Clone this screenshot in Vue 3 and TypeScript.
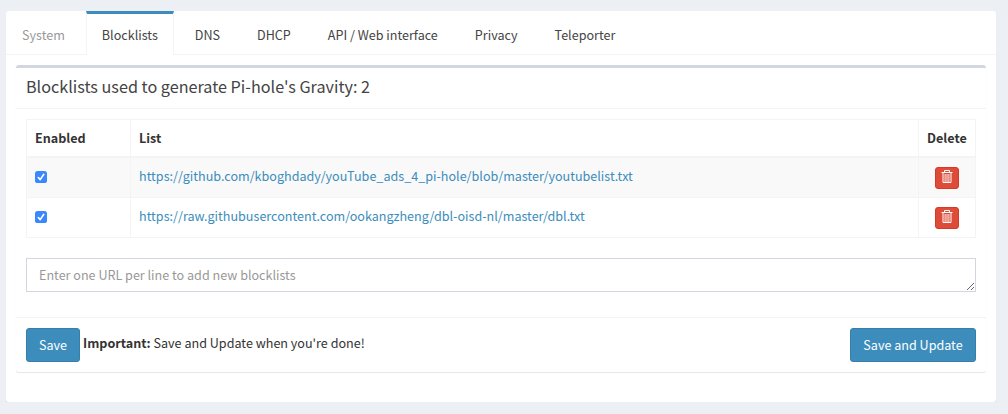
<script setup lang="ts">
import { ref } from 'vue'

interface Blocklist {
  url: string
  enabled: boolean
}

const tabs: string[] = ['System', 'Blocklists', 'DNS', 'DHCP', 'API / Web interface', 'Privacy', 'Teleporter']
const active = ref('Blocklists')
const newLists = ref('')
const lists = ref<Blocklist[]>([
  { url: 'https://github.com/kboghdady/youTube_ads_4_pi-hole/blob/master/youtubelist.txt', enabled: true },
  { url: 'https://raw.githubusercontent.com/ookangzheng/dbl-oisd-nl/master/dbl.txt', enabled: true },
])
</script>

<template>
  <main class="card">
    <nav class="tabs">
      <a
        v-for="tab in tabs"
        :key="tab"
        class="tab"
        :class="{ active: tab === active, muted: tab === 'System' }"
        @click="active = tab"
      >{{ tab }}</a>
    </nav>
    <section class="box">
      <h3 class="box-title">Blocklists used to generate Pi-hole's Gravity: {{ lists.length }}</h3>
      <div class="box-body">
        <div class="table">
          <div class="row head">
            <div class="cell">Enabled</div>
            <div class="cell">List</div>
            <div class="cell">Delete</div>
          </div>
          <div v-for="list in lists" :key="list.url" class="row">
            <div class="cell">
              <label class="check">
                <input v-model="list.enabled" type="checkbox">
                <svg viewBox="0 0 12 12" width="12" height="12">
                  <rect width="12" height="12" rx="2.6" :fill="list.enabled ? '#3b87fd' : '#ccc'" />
                  <path v-if="list.enabled" d="M3.3 6.5 5.2 8.6 8.8 3.3" fill="none" stroke="#fff" stroke-width="1.6" stroke-linecap="round" stroke-linejoin="round" />
                </svg>
              </label>
            </div>
            <div class="cell"><a class="link">{{ list.url }}</a></div>
            <div class="cell center">
              <button class="trash" type="button" aria-label="Delete">
                <svg viewBox="0 0 12 14" width="12" height="14" fill="none" stroke="#fff">
                  <path d="M.5 2.5H11.5M3.5 2.5V.5H8.5V2.5" stroke-width="1" />
                  <path d="M2 3V12.5H10V3" stroke-width="1" />
                  <path d="M4.1 4V12.5M6 4V12.5M7.9 4V12.5" stroke-width=".9" />
                </svg>
              </button>
            </div>
          </div>
        </div>
        <textarea v-model="newLists" class="input" rows="1" placeholder="Enter one URL per line to add new blocklists" />
      </div>
      <footer class="foot">
        <button class="btn" type="button">Save</button>
        <span class="note"><strong>Important:</strong> Save and Update when you're done!</span>
        <button class="btn update" type="button">Save and Update</button>
      </footer>
    </section>
  </main>
</template>

<style>
body {
  background: #ecf0f5;
}
</style>

<style scoped>
* {
  box-sizing: border-box;
}
.card {
  width: 990px;
  height: 391px;
  margin: 11px 0 0 6px;
  background: #fff;
  border-radius: 3px;
  box-shadow: 0 1px 1px rgba(0, 0, 0, 0.1);
  color: #333;
  font: 12.59px/20px "Noto Sans CJK SC", "Noto Sans", sans-serif;
}
.tabs {
  display: flex;
  gap: 5px;
  height: 44px;
  border-bottom: 1px solid #f4f4f4;
}
.tab {
  height: 44px;
  padding: 11px 15px 0;
  border: 1px solid transparent;
  border-top-width: 3px;
  border-bottom: 0;
  color: #444;
  white-space: nowrap;
  cursor: pointer;
}
.muted {
  color: #999;
}
.active {
  background: #fff;
  border-color: #3c8dbc #f4f4f4 transparent;
}
.box {
  height: 307px;
  margin: 10px 10px 0;
  border-top: 3px solid #d2d6de;
  border-radius: 3px;
  box-shadow: 0 1px 1px rgba(0, 0, 0, 0.1);
}
.box-title {
  height: 41px;
  margin: 0;
  padding: 8px 10px 0;
  border-bottom: 1px solid #f4f4f4;
  color: #444;
  font-size: 16.18px;
  font-weight: 400;
  line-height: 20px;
}
.box-body {
  height: 208px;
  padding: 10px;
}
.table {
  border: 1px solid #f4f4f4;
}
.row {
  display: grid;
  grid-template-columns: 103px 788px 1fr;
  height: 40px;
  border-top: 1px solid #f4f4f4;
}
.row:nth-child(2) {
  height: 41px;
  border-top-width: 2px;
  background: #f9f9f9;
}
.row.head {
  height: 36px;
  border-top: 0;
  font-weight: 700;
}
.cell {
  padding: 8px 8px 0;
}
.cell + .cell {
  border-left: 1px solid #f4f4f4;
}
.center {
  display: flex;
  justify-content: center;
}
.check {
  display: block;
  width: 12px;
  height: 12px;
  margin-top: 5px;
}
.check svg {
  display: block;
}
.check input {
  position: absolute;
  opacity: 0;
  margin: 0;
}
.link {
  color: #3c8dbc;
}
.trash {
  display: flex;
  justify-content: center;
  width: 24px;
  height: 22px;
  margin-top: 1px;
  padding: 2px 0 0;
  border: 1px solid #d73925;
  border-radius: 3px;
  background: #dd4b39;
}
.input {
  display: block;
  width: 950px;
  height: 34px;
  margin-top: 20px;
  padding: 6px 12px;
  border: 1px solid #d2d6de;
  border-radius: 0;
  background: #fff;
  color: #555;
  font: inherit;
  outline: none;
  overflow: hidden;
  resize: vertical;
}
.input::placeholder {
  color: #999;
  opacity: 1;
}
.foot {
  display: flex;
  align-items: flex-start;
  height: 55px;
  padding: 10px;
  border-top: 1px solid #f4f4f4;
}
.btn {
  width: 54px;
  height: 34px;
  padding: 0;
  border: 1px solid #367fa9;
  border-radius: 3px;
  background: #3c8dbc;
  color: #fff;
  font: inherit;
}
.note {
  margin: 5px 0 0 3px;
}
.update {
  width: 126px;
  margin-left: auto;
}
</style>
